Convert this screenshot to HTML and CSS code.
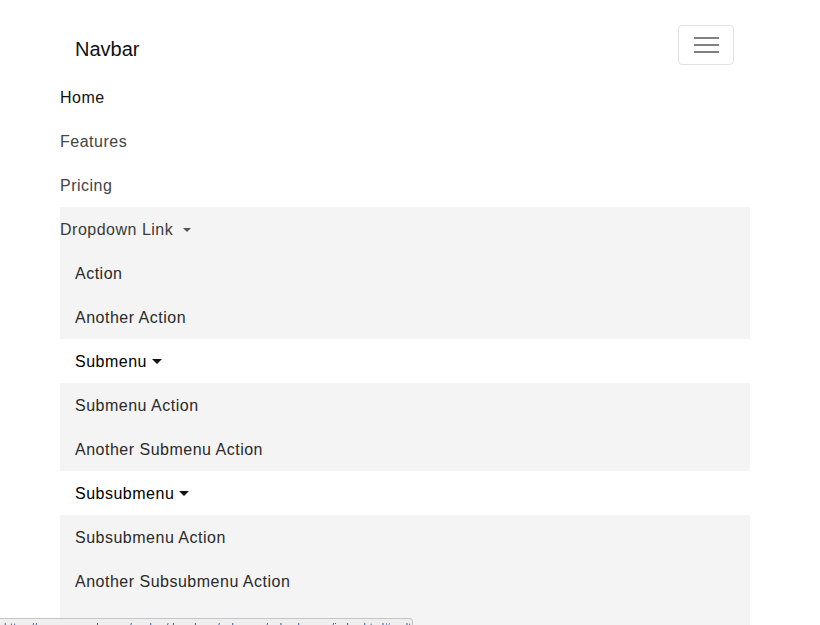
FILE: index.html
```html
<!DOCTYPE html>
<html lang="en">
<head>
<meta charset="utf-8">
<title>Navbar</title>
<link rel="stylesheet" href="styles.css">
</head>
<body>
<div class="page">
  <nav class="navbar">
    <a class="brand" href="#">Navbar</a>
    <button class="toggler" type="button" aria-label="Toggle navigation">
      <span class="toggler-icon"><span></span><span></span><span></span></span>
    </button>
  </nav>
  <ul class="nav">
    <li><a class="nav-link active" href="#">Home</a></li>
    <li><a class="nav-link" href="#">Features</a></li>
    <li><a class="nav-link" href="#">Pricing</a></li>
    <li class="dropdown">
      <a class="nav-link toggle" href="#">Dropdown Link <span class="caret caret-gray"></span></a>
      <ul class="menu">
        <li><a class="item" href="#">Action</a></li>
        <li><a class="item" href="#">Another Action</a></li>
      </ul>
      <a class="item sub-toggle" href="#">Submenu <span class="caret"></span></a>
      <ul class="menu">
        <li><a class="item" href="#">Submenu Action</a></li>
        <li><a class="item" href="#">Another Submenu Action</a></li>
      </ul>
      <a class="item sub-toggle" href="#">Subsubmenu <span class="caret"></span></a>
      <ul class="menu last">
        <li><a class="item" href="#">Subsubmenu Action</a></li>
        <li><a class="item" href="#">Another Subsubmenu Action</a></li>
      </ul>
    </li>
  </ul>
</div>
<div class="statusbar"><span>https://www.example.com/navbar/dropdown/submenu/subsubmenu/index.html#multi-level-dropdown-link-hover</span></div>
</body>
</html>
```

FILE: styles.css
```css
html, body {
  margin: 0;
  padding: 0;
  background: #fff;
  font-family: "Liberation Sans", Arial, Helvetica, sans-serif;
  font-size: 16px;
  color: #212529;
  overflow: hidden;
}
a { text-decoration: none; }
ul { list-style: none; margin: 0; padding: 0; }

.page {
  width: 690px;
  margin-left: 60px;
}

.navbar {
  display: flex;
  justify-content: space-between;
  align-items: flex-start;
  padding: 25px 16px 10px 15px;
}
.brand {
  margin-top: 9px;
  font-size: 20px;
  line-height: 30px;
  color: #111;
}
.toggler {
  width: 56px;
  height: 40px;
  padding: 0;
  border: 1px solid #e2e2e2;
  border-radius: 4px;
  background: #fff;
  display: flex;
  align-items: center;
  justify-content: center;
}
.toggler-icon {
  display: flex;
  flex-direction: column;
  gap: 5px;
  width: 25px;
}
.toggler-icon span {
  display: block;
  height: 2px;
  background: #808080;
}

.nav-link, .item {
  display: block;
  line-height: 24px;
  padding: 11px 0 9px;
  letter-spacing: 0.5px;
}
.nav-link { color: #444; }
.nav-link.active { color: #111; }
.dropdown { background: #f4f4f4; }
.toggle { color: #3a3a3a; }
.item {
  padding-left: 15px;
  color: #2a2a2a;
}
.sub-toggle {
  background: #fff;
  color: #000;
}
.menu.last { padding-bottom: 30px; }

.caret {
  display: inline-block;
  width: 0;
  height: 0;
  margin-left: 0;
  vertical-align: 3px;
  border-left: 5px solid transparent;
  border-right: 5px solid transparent;
  border-top: 5px solid #111;
}
.caret-gray {
  margin-left: 5px;
  border-left-width: 4.5px;
  border-right-width: 4.5px;
  border-top: 4.5px solid #555;
}

.statusbar {
  position: fixed;
  left: 0;
  bottom: 0;
  width: 412px;
  height: 6px;
  overflow: hidden;
  background: #efefef;
  border-top: 1px solid #c4c4c4;
  border-right: 1px solid #c4c4c4;
  border-top-right-radius: 4px;
  font-size: 11px;
  line-height: 14px;
  color: #2b5bb8;
  white-space: nowrap;
}
.statusbar span {
  display: block;
  padding: 1px 0 0 4px;
}
```
